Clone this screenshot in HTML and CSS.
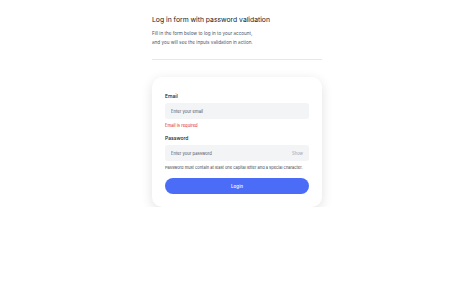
FILE: index.html
```html
<!DOCTYPE html>
<html lang="en">
<head>
    <meta charset="UTF-8">
    <meta name="viewport" content="width=device-width, initial-scale=1.0">
    <title>Log in form with password validation</title>
    <link rel="stylesheet" href="styles.css">
</head>
<body>
    <div class="page">
        <div class="intro">
            <h1>Log in form with password validation</h1>
            <p>Fill in the form below to log in to your account,<br>and you will see the inputs validation in action.</p>
        </div>
        <div class="card">
            <label class="label" for="email">Email</label>
            <div class="field">
                <input type="email" id="email" placeholder="Enter your email">
            </div>
            <p class="error">Email is required</p>
            <label class="label" for="password">Password</label>
            <div class="field">
                <input type="password" id="password" placeholder="Enter your password">
                <span class="show">Show</span>
            </div>
            <p class="hint">Password must contain at least one capital letter and a special character.</p>
            <button class="login-btn">Login</button>
        </div>
    </div>
</body>
</html>
```

FILE: styles.css
```css
* {
    box-sizing: border-box;
    margin: 0;
    padding: 0;
    font-family: 'Inter', sans-serif;
}

body {
    background: #ffffff;
    color: #1f2937;
}

.page {
    width: 170px;
    margin: 0 auto;
    padding-top: 16px;
}

.intro {
    padding-bottom: 12px;
    border-bottom: 1px solid #e5e7eb;
}

h1 {
    font-size: 6.8px;
    line-height: 8px;
    font-weight: 400;
    color: #111827;
    margin-bottom: 5px;
}

.intro p {
    font-size: 4.6px;
    line-height: 9px;
    color: #4b5563;
}

.card {
    margin-top: 17px;
    padding: 16px 13px 13px;
    border-radius: 10px;
    background: #fff;
    box-shadow: 0 3px 12px rgba(0, 0, 0, 0.12);
    display: flex;
    flex-direction: column;
}

.label {
    font-size: 5px;
    line-height: 6px;
    font-weight: 500;
    color: #111827;
    margin-bottom: 4px;
}

.field {
    display: flex;
    align-items: center;
    height: 16px;
    border-radius: 3px;
    background: #f3f4f6;
    padding: 0 6px;
}

.field input {
    flex: 1;
    border: none;
    outline: none;
    background: none;
    font-size: 4.2px;
    color: #111827;
}

.field input::placeholder {
    color: #4b5563;
}

.show {
    font-size: 4.2px;
    color: #9ca3af;
}

.error {
    font-size: 4.2px;
    line-height: 4px;
    color: #dc2626;
    margin: 5px 0 7px;
}

.hint {
    font-size: 4px;
    line-height: 5px;
    color: #374151;
    margin-top: 4px;
}

.login-btn {
    margin-top: 8px;
    height: 16px;
    border: none;
    border-radius: 8px;
    background: #4a6cf7;
    color: #fff;
    font-size: 4.6px;
    font-weight: 500;
    cursor: pointer;
}
```
